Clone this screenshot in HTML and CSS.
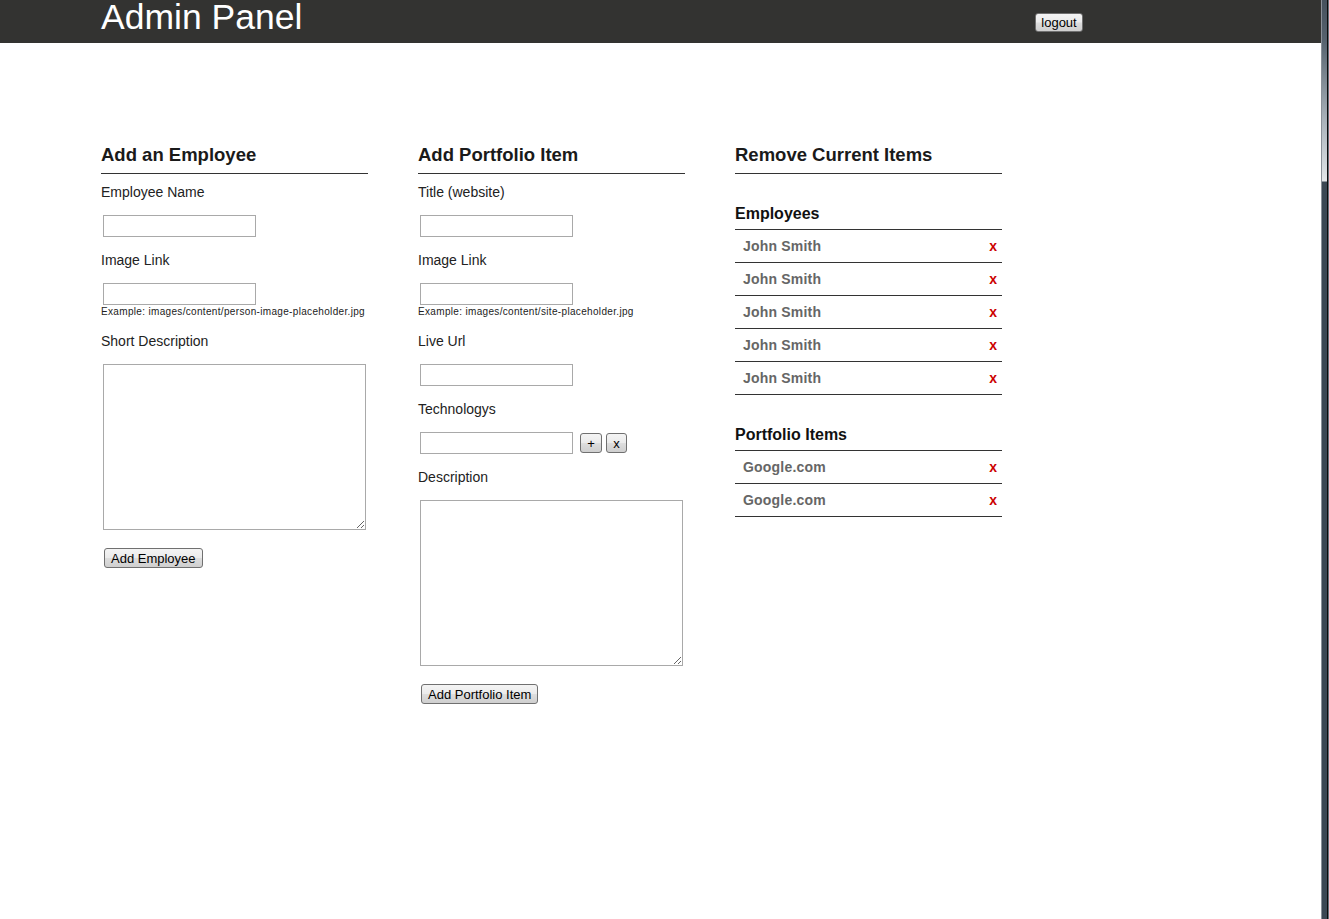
FILE: index.html
```html
<!DOCTYPE html>
<html lang="en">
<head>
<meta charset="utf-8">
<title>Admin Panel</title>
<link rel="stylesheet" href="styles.css">
</head>
<body>
<header class="topbar">
  <div class="topbar-inner">
    <h1 class="brand">Admin Panel</h1>
    <button class="btn btn-logout" type="button">logout</button>
  </div>
</header>

<main class="content">
  <section class="col">
    <h2 class="col-title">Add an Employee</h2>
    <div class="fields">
      <div class="field">
        <label class="field-label">Employee Name</label>
        <input class="text-input" type="text">
      </div>
      <div class="field field-hint">
        <label class="field-label">Image Link</label>
        <input class="text-input" type="text">
        <span class="hint">Example: images/content/person-image-placeholder.jpg</span>
      </div>
      <div class="field field-area">
        <label class="field-label">Short Description</label>
        <textarea class="text-area"></textarea>
      </div>
      <button class="btn btn-form" type="button">Add Employee</button>
    </div>
  </section>

  <section class="col">
    <h2 class="col-title">Add Portfolio Item</h2>
    <div class="fields">
      <div class="field">
        <label class="field-label">Title (website)</label>
        <input class="text-input" type="text">
      </div>
      <div class="field field-hint">
        <label class="field-label">Image Link</label>
        <input class="text-input" type="text">
        <span class="hint">Example: images/content/site-placeholder.jpg</span>
      </div>
      <div class="field">
        <label class="field-label">Live Url</label>
        <input class="text-input" type="text">
      </div>
      <div class="field">
        <label class="field-label">Technologys</label>
        <div class="tech-row">
          <input class="text-input" type="text">
          <button class="btn btn-small btn-plus" type="button">+</button>
          <button class="btn btn-small" type="button">x</button>
        </div>
      </div>
      <div class="field field-area">
        <label class="field-label">Description</label>
        <textarea class="text-area"></textarea>
      </div>
      <button class="btn btn-form" type="button">Add Portfolio Item</button>
    </div>
  </section>

  <section class="col">
    <h2 class="col-title">Remove Current Items</h2>
    <h3 class="list-title">Employees</h3>
    <ul class="item-list">
      <li class="item"><span class="item-name">John Smith</span><span class="item-remove">x</span></li>
      <li class="item"><span class="item-name">John Smith</span><span class="item-remove">x</span></li>
      <li class="item"><span class="item-name">John Smith</span><span class="item-remove">x</span></li>
      <li class="item"><span class="item-name">John Smith</span><span class="item-remove">x</span></li>
      <li class="item"><span class="item-name">John Smith</span><span class="item-remove">x</span></li>
    </ul>
    <h3 class="list-title">Portfolio Items</h3>
    <ul class="item-list">
      <li class="item"><span class="item-name">Google.com</span><span class="item-remove">x</span></li>
      <li class="item"><span class="item-name">Google.com</span><span class="item-remove">x</span></li>
    </ul>
  </section>
</main>

<div class="window-edge"><div class="window-edge-glow"></div></div>
</body>
</html>
```

FILE: styles.css
```css
* { box-sizing: border-box; }

html, body {
  margin: 0;
  padding: 0;
  background: #ffffff;
}

body {
  font-family: "Liberation Sans", Arial, sans-serif;
  color: #222;
  min-height: 919px;
}

.topbar {
  background: #333331;
  height: 43px;
}

.topbar-inner {
  display: flex;
  justify-content: space-between;
  align-items: flex-start;
  width: 1083px;
  padding-left: 101px;
}

.brand {
  margin: 0;
  font-size: 35.5px;
  line-height: 34px;
  font-weight: normal;
  color: #ffffff;
}

.btn {
  font-family: "Liberation Sans", Arial, sans-serif;
  font-size: 13px;
  line-height: 15px;
  color: #000;
  padding: 0 6px;
  border: 1px solid #707070;
  border-radius: 3px;
  background: linear-gradient(to bottom, #f4f4f4 0%, #ebebeb 48%, #dddddd 52%, #cfcfcf 100%);
  cursor: pointer;
}

.btn-logout {
  margin-top: 13px;
  height: 19px;
  width: 48px;
  padding: 0;
}

.content {
  display: flex;
  gap: 50px;
  padding: 101px 0 0 101px;
}

.col {
  width: 267px;
  flex: none;
}

.col-title {
  margin: 0;
  font-size: 18.5px;
  line-height: 21px;
  font-weight: bold;
  color: #1a1a1a;
  padding-bottom: 8px;
  border-bottom: 1px solid #333;
}

.fields {
  display: flex;
  flex-direction: column;
  align-items: flex-start;
  padding-top: 10px;
}

.field {
  display: flex;
  flex-direction: column;
  align-items: flex-start;
  margin-bottom: 15px;
}

.field-hint { margin-bottom: 15px; }
.field-area { margin-bottom: 18px; }

.field-label {
  font-size: 14px;
  line-height: 16px;
  margin-bottom: 15px;
  color: #222;
}

.text-input {
  width: 153px;
  height: 22px;
  margin: 0 0 0 2px;
  border: 1px solid #a9a9a9;
  background: #fff;
  padding: 0 3px;
  font-size: 13px;
}

.hint {
  font-size: 10px;
  line-height: 13px;
  letter-spacing: 0.33px;
  color: #222;
}

.text-area {
  width: 263px;
  height: 166px;
  margin: 0 0 0 2px;
  border: 1px solid #a9a9a9;
  background: #fff;
  padding: 2px;
  font-family: "Liberation Sans", Arial, sans-serif;
  font-size: 13px;
}

.btn-form {
  height: 20px;
  margin-left: 3px;
}

.tech-row {
  display: flex;
  align-items: center;
}

.btn-small {
  height: 20px;
  min-width: 21px;
  padding: 0 6px;
  margin-left: 4px;
}

.btn-plus {
  margin-left: 7px;
  width: 22px;
  padding: 0;
}

.list-title {
  margin: 30px 0 0;
  font-size: 16px;
  line-height: 20px;
  font-weight: bold;
  color: #111;
  padding-bottom: 5px;
  border-bottom: 1px solid #333;
}

.item-list {
  list-style: none;
  margin: 0;
  padding: 0;
}

.item {
  display: flex;
  justify-content: space-between;
  align-items: center;
  height: 33px;
  line-height: 32px;
  padding: 0 5px 0 8px;
  border-bottom: 1px solid #333;
  font-size: 14px;
  font-weight: bold;
}

.item-name {
  color: #666;
  letter-spacing: 0.2px;
}

.item-remove {
  color: #cc0000;
}

.window-edge {
  position: fixed;
  top: 0;
  right: 0;
  width: 8px;
  height: 100%;
  background: linear-gradient(to right, #8a9098 0 1px, #3b4753 1px 6px, #0c0c0c 6px 7px, #66707a 7px 8px);
}

.window-edge-glow {
  position: absolute;
  top: 0;
  left: 1px;
  width: 5px;
  height: 183px;
  background: linear-gradient(to bottom, #45515d 0px, #56626e 40px, #a9b2ba 120px, #d7dce0 170px, #e4e7ea 181px, #3b4753 182px);
}
```
